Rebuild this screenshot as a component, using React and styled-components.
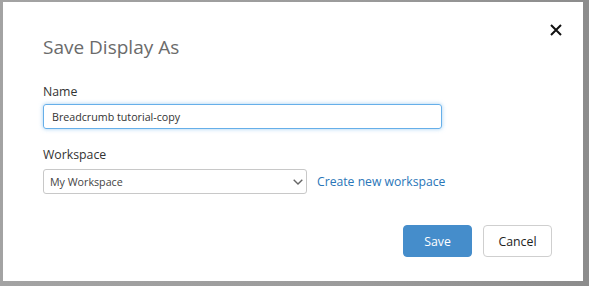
import React from "react";
import styled, { createGlobalStyle } from "styled-components";

const Global = createGlobalStyle`
  html, body { margin: 0; padding: 0; }
  body {
    background: #9a9a9a;
    font-family: "Open Sans", "Noto Sans", sans-serif;
    width: 589px;
    height: 286px;
    overflow: hidden;
  }
`;

const Backdrop = styled.div`
  width: 589px;
  height: 286px;
  box-sizing: border-box;
  padding: 2px 6px 5px 3px;
  background: linear-gradient(90deg, #a3a3a3 0%, #9b9b9b 60%, #8c8c8c 100%);
`;

const Dialog = styled.div`
  position: relative;
  width: 580px;
  height: 279px;
  background: #fff;
  box-sizing: border-box;
  padding: 32px 40px 0 40px;
  display: flex;
  flex-direction: column;
`;

const Close = styled.button`
  position: absolute;
  top: 21px;
  right: 20px;
  width: 14px;
  height: 14px;
  padding: 0;
  border: 0;
  background: transparent;
  display: flex;
  align-items: center;
  justify-content: center;
`;

const Title = styled.h2`
  margin: 0 0 23px 0;
  font-size: 19px;
  font-weight: 400;
  line-height: 26px;
  color: #6b6b6b;
`;

const Label = styled.label`
  display: block;
  font-size: 12.3px;
  line-height: 17px;
  color: #333;
  margin-bottom: ${(p) => p.$mb || 6}px;
`;

const TextInput = styled.div`
  width: 399px;
  height: 25px;
  box-sizing: border-box;
  border: 1px solid #66afe9;
  border-radius: 3px;
  box-shadow: 0 0 4px rgba(102, 175, 233, 0.6);
  padding: 0 8px;
  display: flex;
  align-items: center;
  font-size: 10.7px;
  color: #333;
`;

const Row = styled.div`
  display: flex;
  align-items: center;
  gap: 10px;
`;

const Select = styled.div`
  width: 264px;
  height: 25px;
  box-sizing: border-box;
  border: 1px solid #c8c8c8;
  border-radius: 3px;
  padding: 0 3px 0 6px;
  display: flex;
  align-items: center;
  justify-content: space-between;
  font-size: 10.7px;
  color: #444;
`;

const Link = styled.a`
  font-size: 12.2px;
  color: #2a76b8;
  text-decoration: none;
`;

const Actions = styled.div`
  display: flex;
  justify-content: flex-end;
  gap: 11px;
  margin-top: 31px;
  margin-right: -9px;
`;

const Button = styled.button`
  width: 69px;
  height: 32px;
  box-sizing: border-box;
  border-radius: 4px;
  font-family: inherit;
  font-size: 12.3px;
  border: 1px solid ${(p) => (p.$primary ? "#458dcb" : "#cfcfcf")};
  background: ${(p) => (p.$primary ? "#458dcb" : "#fff")};
  color: ${(p) => (p.$primary ? "#fff" : "#222")};
`;

const Field = styled.div`
  margin-bottom: ${(p) => p.$mb || 0}px;
`;

export default function App() {
  return (
    <>
      <Global />
      <Backdrop>
        <Dialog>
          <Close aria-label="Close">
            <svg width="12" height="12" viewBox="0 0 12 12">
              <path d="M1 1 L11 11 M11 1 L1 11" stroke="#111" strokeWidth="2" />
            </svg>
          </Close>
          <Title>Save Display As</Title>
          <Field $mb={17}>
            <Label $mb={4}>Name</Label>
            <TextInput>Breadcrumb tutorial-copy</TextInput>
          </Field>
          <Field>
            <Label $mb={6}>Workspace</Label>
            <Row>
              <Select>
                <span>My Workspace</span>
                <svg width="10" height="6" viewBox="0 0 10 6">
                  <path d="M0.7 0.7 L5 5 L9.3 0.7" fill="none" stroke="#666" strokeWidth="1.4" />
                </svg>
              </Select>
              <Link href="#">Create new workspace</Link>
            </Row>
          </Field>
          <Actions>
            <Button $primary>Save</Button>
            <Button>Cancel</Button>
          </Actions>
        </Dialog>
      </Backdrop>
    </>
  );
}
